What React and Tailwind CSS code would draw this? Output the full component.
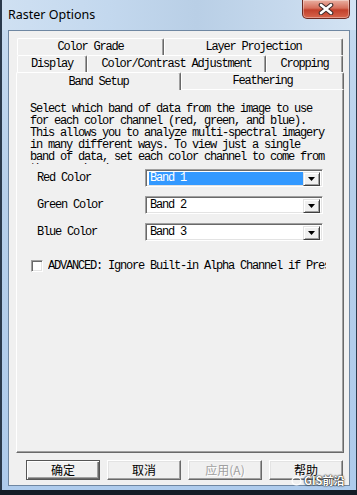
import React from "react";

const mono = "font-['Liberation_Mono',monospace] text-[12px] tracking-[-1.2px] leading-[12px] text-black";
const cjk = "font-['Noto_Sans_CJK_SC','Noto_Sans',sans-serif]";

function Tab({ label, className = "" }) {
  return (
    <div
      className={`flex items-center justify-center bg-[#f0f0f0] border-t border-l border-r border-t-white border-l-white border-r-[#696969] shadow-[inset_-1px_0_#a0a0a0] rounded-t-[2px] ${mono} ${className}`}
    >
      {label}
    </div>
  );
}

function Combo({ value, selected }) {
  return (
    <div className="w-[178px] h-[18px] flex bg-white border border-t-[#a0a0a0] border-l-[#a0a0a0] border-b-white border-r-white shadow-[inset_1px_1px_#696969,inset_-1px_-1px_#e3e3e3] p-[2px]">
      <div className="flex-1 flex items-center pl-[1px]">
        <span
          className={`${mono} h-[13px] flex items-center w-full pl-[1px] ${
            selected ? "bg-[#3399ff] text-white" : ""
          }`}
        >
          {value}
        </span>
      </div>
      <div className="w-[17px] h-[14px] bg-[#f0f0f0] border border-t-[#e3e3e3] border-l-[#e3e3e3] border-b-[#404040] border-r-[#404040] shadow-[inset_1px_1px_white,inset_-1px_-1px_#a0a0a0] flex items-center justify-center">
        <svg width="7" height="4" viewBox="0 0 7 4">
          <path d="M0 0h7L3.5 4z" fill="#000" />
        </svg>
      </div>
    </div>
  );
}

function Button({ label, isDefault, disabled }) {
  return (
    <div
      className={`w-[74px] h-[20px] flex items-center justify-center bg-[#f0f0f0] border ${
        isDefault
          ? "border-[#555555] shadow-[inset_1px_1px_white,inset_-1px_-1px_#696969,inset_-2px_-2px_#a0a0a0]"
          : "border-t-white border-l-white border-b-[#696969] border-r-[#696969] shadow-[inset_-1px_-1px_#a0a0a0,inset_1px_1px_#e3e3e3]"
      } ${cjk} text-[12px] ${
        disabled ? "text-[#a0a0a0] [text-shadow:1px_1px_white]" : "text-black"
      }`}
    >
      {label}
    </div>
  );
}

export default function App() {
  return (
    <div className="relative w-[357px] h-[495px] overflow-hidden bg-[#141c26] flex flex-col">
      {/* window frame */}
      <div className="h-[490px] flex flex-col bg-[linear-gradient(180deg,#c6dbf1_0%,#b6cfea_40%,#aecbec_100%)] border-l-2 border-r border-l-[#2b3a4c] border-r-[#2b3a4c]">
        {/* title bar */}
        <div className="h-[30px] flex items-start justify-between pl-[6px] pr-[6px] bg-[linear-gradient(90deg,#cfe0f2_0%,#c3d8ee_30%,#b9cfe6_55%,#c6d9ed_80%,#d3e3f3_100%)]">
          <span className="mt-[6px] font-['Noto_Sans',sans-serif] text-[12.5px] leading-[18px] text-black">
            Raster Options
          </span>
          <div className="w-[48px] h-[19px] flex items-center justify-center rounded-b-[5px] border border-t-0 border-[#6b2a22] bg-[linear-gradient(180deg,#eab0a2_0%,#d66f5c_45%,#c2402b_55%,#d7654c_100%)] shadow-[inset_0_0_0_1px_rgba(255,255,255,0.35)]">
            <svg width="16" height="12" viewBox="0 0 16 12">
              <path d="M3 2l10 8M13 2L3 10" stroke="#3b2a2a" strokeWidth="4.6" strokeLinecap="round" />
              <path d="M3 2l10 8M13 2L3 10" stroke="#ffffff" strokeWidth="2.6" strokeLinecap="round" />
            </svg>
          </div>
        </div>

        {/* client area */}
        <div className="mx-[6px] h-[456px] flex flex-col bg-[#f0f0f0] border border-[#6f87a2]">
          {/* tab control */}
          <div className="mt-[7px] ml-[7px] mr-[5px] h-[415px] flex flex-col">
            <div className="flex px-[1px] h-[17px]">
              <Tab label="Color Grade" className="w-[147px] h-[17px]" />
              <Tab label="Layer Projection" className="flex-1 h-[17px]" />
            </div>
            <div className="flex px-[1px] h-[17px]">
              <Tab label="Display" className="w-[70px] h-[17px]" />
              <Tab label="Color/Contrast Adjustment" className="w-[179px] h-[17px]" />
              <Tab label="Cropping" className="flex-1 h-[17px]" />
            </div>
            <div className="flex items-end h-[17px]">
              <Tab label="Band Setup" className="relative z-10 w-[165px] h-[18px] -mb-px" />
              <Tab label="Feathering" className="flex-1 h-[17px]" />
            </div>

            {/* panel */}
            <div className="flex-1 bg-[#f0f0f0] border border-t-white border-l-white border-b-[#696969] border-r-[#696969] shadow-[inset_-1px_-1px_#a0a0a0] pl-[13px] pt-[13px] flex flex-col">
              <div className={`h-[61px] overflow-hidden whitespace-pre ${mono}`}>
                {"Select which band of data from the image to use\nfor each color channel (red, green, and blue).\nThis allows you to analyze multi-spectral imagery\nin many different ways. To view just a single\nband of data, set each color channel to come from\nthe same band."}
              </div>

              <div className="mt-[5px] flex flex-col gap-[9px]">
                {[
                  ["Red Color", "Band 1", true],
                  ["Green Color", "Band 2", false],
                  ["Blue Color", "Band 3", false],
                ].map(([label, value, sel]) => (
                  <div key={label} className="flex items-center pl-[7px]">
                    <span className={`w-[108px] ${mono}`}>{label}</span>
                    <Combo value={value} selected={sel} />
                  </div>
                ))}
              </div>

              <div className="mt-[19px] flex items-center">
                <div className="ml-[1px] w-[12px] h-[12px] bg-white border border-t-[#a0a0a0] border-l-[#a0a0a0] border-b-white border-r-white shadow-[inset_1px_1px_#696969,inset_-1px_-1px_#e3e3e3]" />
                <div className={`ml-[5px] w-[278px] overflow-hidden whitespace-nowrap ${mono}`}>
                  ADVANCED: Ignore Built-in Alpha Channel if Present
                </div>
              </div>
            </div>
          </div>

          {/* buttons */}
          <div className="mt-[7px] pl-[17px] flex gap-[7px]">
            <Button label="确定" isDefault />
            <Button label="取消" />
            <Button label="应用(A)" disabled />
            <Button label="帮助" />
          </div>
        </div>
      </div>

      {/* watermark */}
      <div className="absolute left-[291px] top-[474px] flex items-center gap-[2px]">
        <svg width="11" height="10" viewBox="0 0 11 10">
          <ellipse cx="5.5" cy="5" rx="4.5" ry="3.8" fill="none" stroke="#ffffff" strokeWidth="1.2" />
        </svg>
        <span className={`${cjk} text-[11px] leading-[13px] text-white font-bold [text-shadow:0_0_2px_#000,0_0_1px_#000]`}>
          GIS前沿
        </span>
      </div>
    </div>
  );
}
